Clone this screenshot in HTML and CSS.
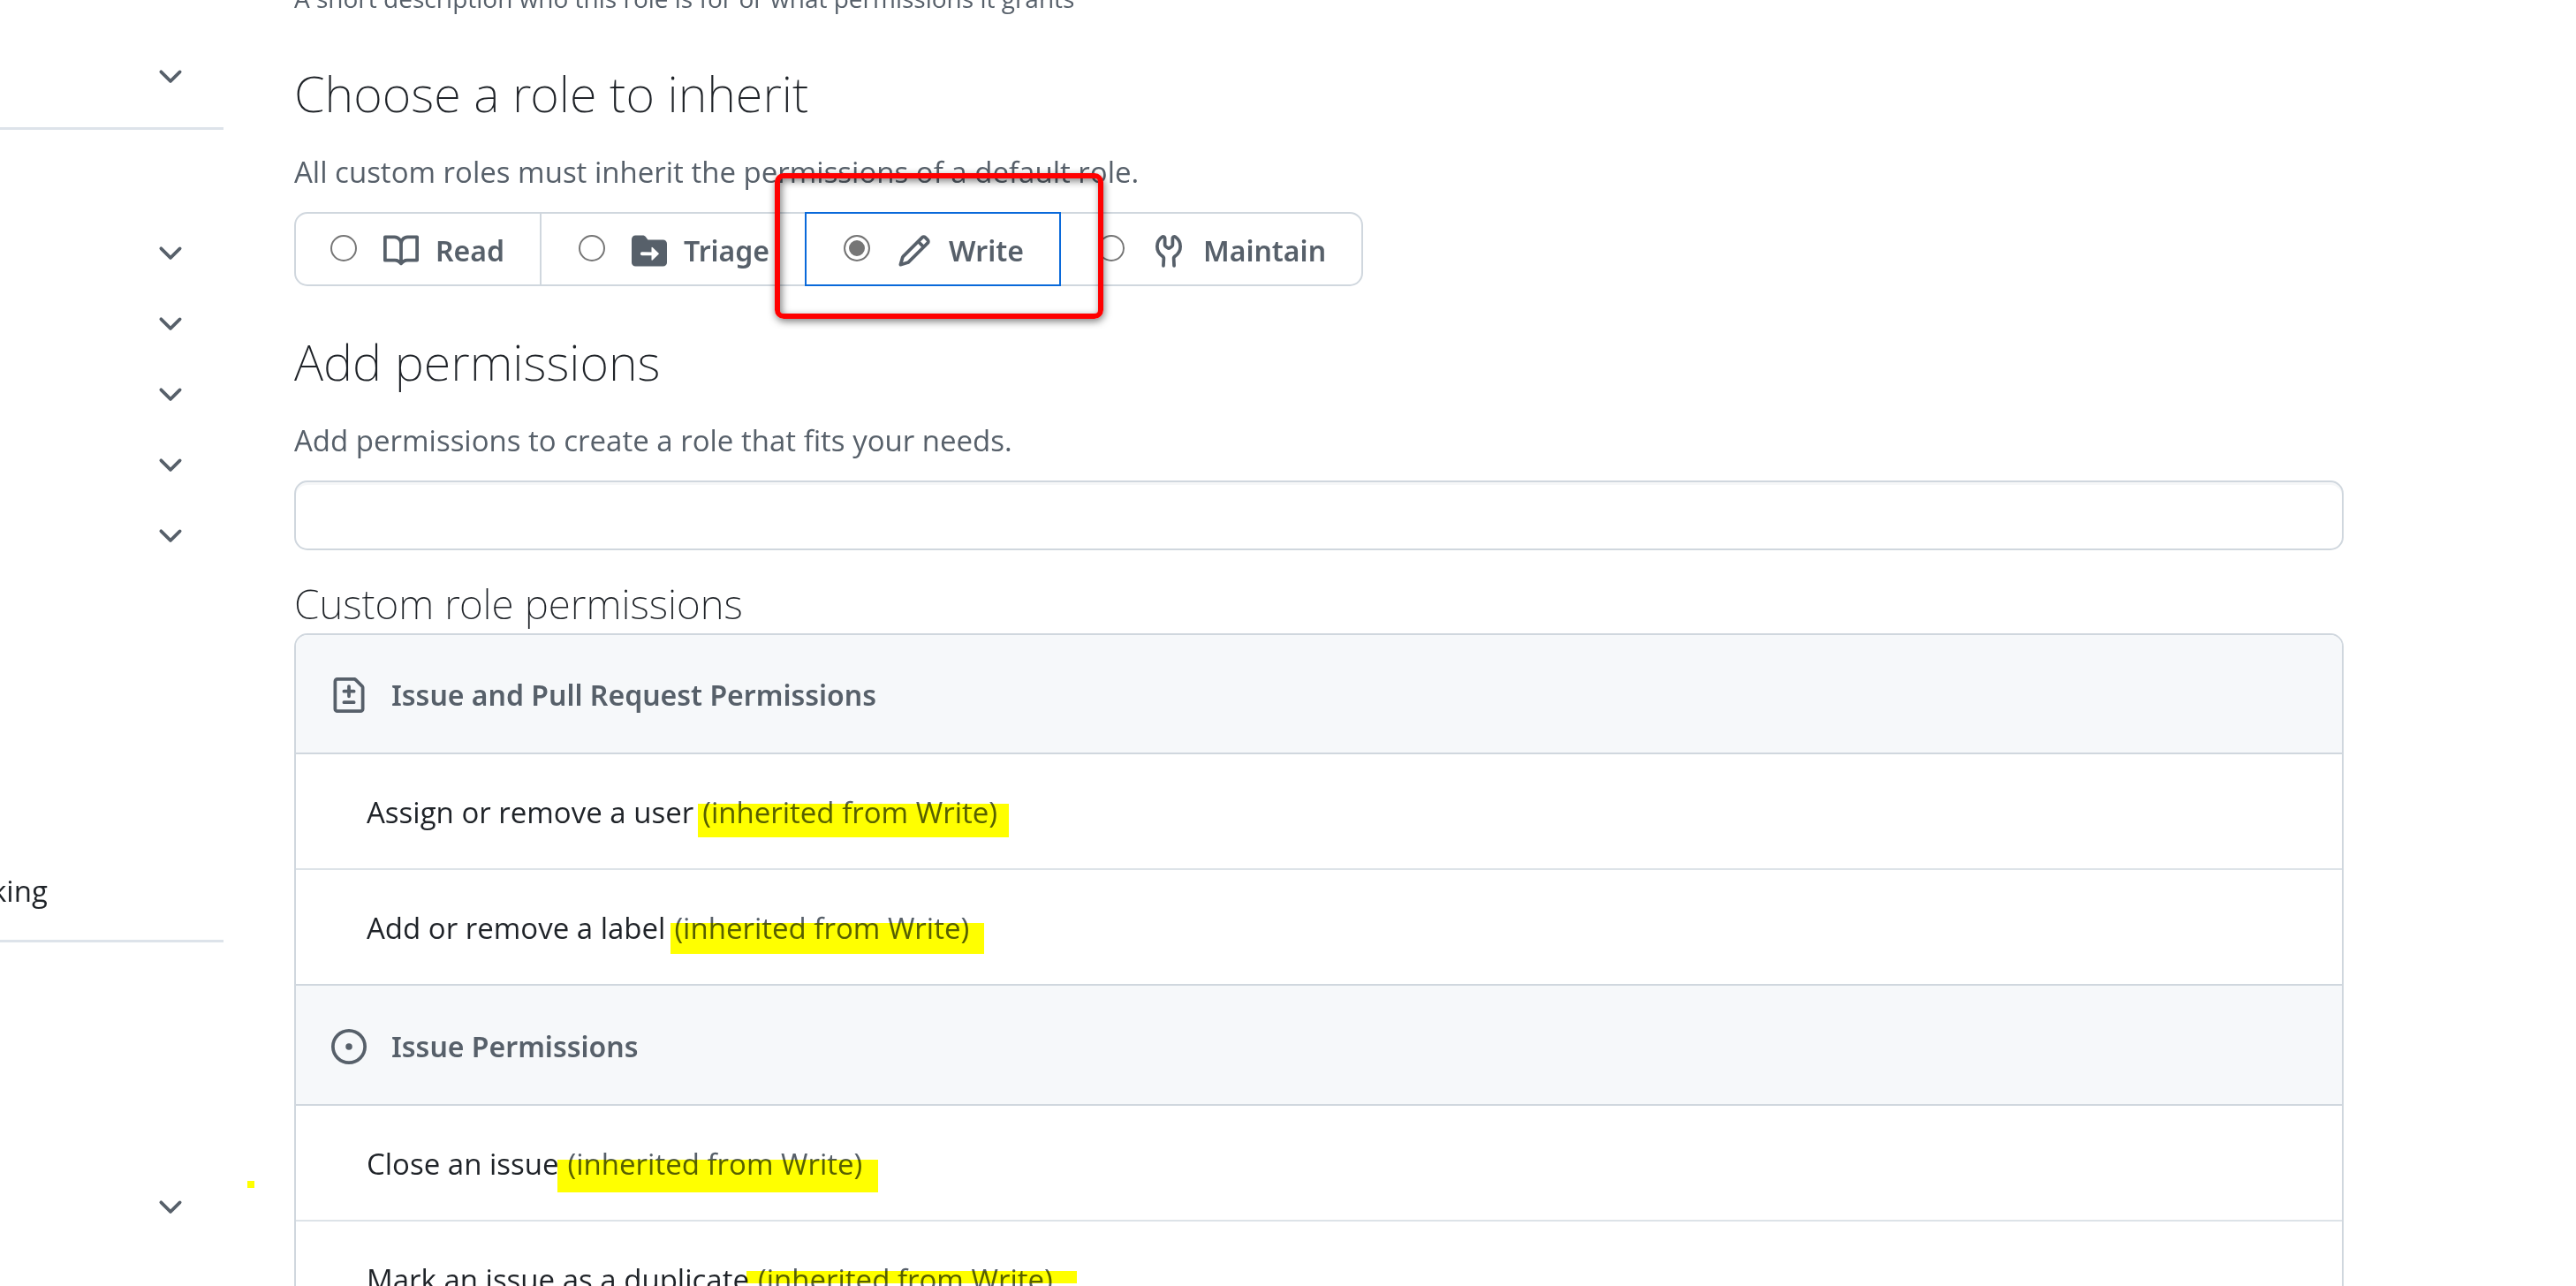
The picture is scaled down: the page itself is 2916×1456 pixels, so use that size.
FILE: index.html
```html
<!DOCTYPE html>
<html lang="en">
<head>
<meta charset="utf-8">
<title>Create a custom role</title>
<link rel="stylesheet" href="styles.css">
</head>
<body>
<svg class="sprite" aria-hidden="true">
  <symbol id="chevron" viewBox="0 0 16 16"><path d="M12.78 5.22a.75.75 0 0 1 0 1.06l-4.25 4.25a.75.75 0 0 1-1.06 0L3.22 6.28a.75.75 0 1 1 1.06-1.06L8 8.94l3.72-3.72a.75.75 0 0 1 1.06 0Z"/></symbol>
</svg>
<div class="layout">
  <nav class="sidebar" aria-label="Settings">
    <button class="nav-row" type="button" aria-label="Expand section"><svg class="icon"><use href="#chevron"/></svg></button>
    <hr class="nav-divider">
    <div class="nav-group">
      <button class="nav-row" type="button" aria-label="Expand section"><svg class="icon"><use href="#chevron"/></svg></button>
      <button class="nav-row" type="button" aria-label="Expand section"><svg class="icon"><use href="#chevron"/></svg></button>
      <button class="nav-row" type="button" aria-label="Expand section"><svg class="icon"><use href="#chevron"/></svg></button>
      <button class="nav-row" type="button" aria-label="Expand section"><svg class="icon"><use href="#chevron"/></svg></button>
      <button class="nav-row" type="button" aria-label="Expand section"><svg class="icon"><use href="#chevron"/></svg></button>
    </div>
    <a class="nav-link" href="#">king</a>
    <hr class="nav-divider">
    <div class="nav-group nav-group-last">
      <button class="nav-row" type="button" aria-label="Expand section"><svg class="icon"><use href="#chevron"/></svg></button>
    </div>
  </nav>

  <main class="main">
    <p class="note">A short description who this role is for or what permissions it grants</p>

    <h2 class="title">Choose a role to inherit</h2>
    <p class="lead">All custom roles must inherit the permissions of a default role.</p>
    <div class="roles" role="radiogroup" aria-label="Choose a role to inherit">
      <label class="role">
        <input class="radio" type="radio" name="role">
        <svg class="icon" viewBox="0 0 16 16"><path d="M0 1.75A.75.75 0 0 1 .75 1h4.253c1.227 0 2.317.59 3 1.501A3.744 3.744 0 0 1 11.006 1h4.245a.75.75 0 0 1 .75.75v10.5a.75.75 0 0 1-.75.75h-4.507a2.25 2.25 0 0 0-1.591.659l-.622.621a.75.75 0 0 1-1.06 0l-.622-.621A2.25 2.25 0 0 0 5.258 13H.75a.75.75 0 0 1-.75-.75Zm7.251 10.324.004-5.073-.002-2.253A2.25 2.25 0 0 0 5.003 2.5H1.5v9h3.757a3.75 3.75 0 0 1 1.994.574ZM8.755 4.75l-.004 7.322a3.752 3.752 0 0 1 1.992-.572H14.5v-9h-3.495a2.25 2.25 0 0 0-2.25 2.25Z"/></svg>
        <span>Read</span>
      </label>
      <label class="role">
        <input class="radio" type="radio" name="role">
        <svg class="icon" viewBox="0 0 16 16"><path d="M1.75 1A1.75 1.75 0 0 0 0 2.75v10.5C0 14.216.784 15 1.75 15h12.5A1.75 1.75 0 0 0 16 13.25v-8.5A1.75 1.75 0 0 0 14.25 3H7.5a.25.25 0 0 1-.2-.1l-.9-1.2C6.07 1.26 5.55 1 5 1Z"/><path class="knockout" d="M9 8.55V6.6q0-.5.45-.2l2.8 2.65q.2.2 0 .45l-2.8 2.65q-.45.3-.45-.2v-1.9H4.7a.75.75 0 0 1 0-1.5Z"/></svg>
        <span>Triage</span>
      </label>
      <label class="role role-selected">
        <input class="radio" type="radio" name="role" checked>
        <svg class="icon" viewBox="0 0 16 16"><path d="M11.013 1.427a1.75 1.75 0 0 1 2.474 0l1.086 1.086a1.75 1.75 0 0 1 0 2.474l-8.61 8.61c-.21.21-.47.364-.756.445l-3.251.93a.75.75 0 0 1-.927-.928l.929-3.25c.081-.286.235-.547.445-.758l8.61-8.61Zm.176 4.823L9.75 4.81l-6.286 6.287a.253.253 0 0 0-.064.108l-.558 1.953 1.953-.558a.253.253 0 0 0 .108-.064Zm1.238-3.763a.25.25 0 0 0-.354 0L10.811 3.75l1.439 1.44 1.263-1.263a.25.25 0 0 0 0-.354Z"/></svg>
        <span>Write</span>
        <span class="callout" aria-hidden="true"></span>
      </label>
      <label class="role">
        <input class="radio" type="radio" name="role">
        <svg class="icon" viewBox="0 0 16 16"><path d="M5.433 2.304A4.494 4.494 0 0 0 3.5 6c0 1.598.832 3.002 2.09 3.802.518.328.929.923.902 1.64v.008l-.164 3.337a.75.75 0 1 1-1.498-.073l.163-3.33c.002-.085-.05-.216-.207-.316A5.996 5.996 0 0 1 2 6a5.994 5.994 0 0 1 2.567-4.92 1.482 1.482 0 0 1 1.673-.04c.462.296.76.827.76 1.423v2.82c0 .082.041.16.11.206l.75.51a.25.25 0 0 0 .28 0l.75-.51A.25.25 0 0 0 9 5.282V2.463c0-.596.298-1.127.76-1.423a1.482 1.482 0 0 1 1.673.04A5.994 5.994 0 0 1 14 6a5.996 5.996 0 0 1-2.786 5.068c-.157.1-.209.23-.207.315l.163 3.33a.75.75 0 1 1-1.498.074l-.164-3.345c-.027-.717.384-1.312.902-1.64A4.496 4.496 0 0 0 12.5 6a4.494 4.494 0 0 0-1.933-3.696c-.024.017-.067.067-.067.16v2.818a1.75 1.75 0 0 1-.767 1.448l-.75.51a1.75 1.75 0 0 1-1.966 0l-.75-.51A1.75 1.75 0 0 1 5.5 5.282V2.463c0-.092-.043-.142-.067-.159Z"/></svg>
        <span>Maintain</span>
      </label>
    </div>

    <h2 class="title">Add permissions</h2>
    <label class="lead" for="permission">Add permissions to create a role that fits your needs.</label>
    <input class="search" id="permission" type="text">

    <h3 class="subtitle">Custom role permissions</h3>
    <ul class="box">
      <li class="box-head">
        <svg class="icon" viewBox="0 0 16 16"><path d="M1 1.75C1 .784 1.784 0 2.75 0h7.586c.464 0 .909.184 1.237.513l2.914 2.914c.329.328.513.773.513 1.237v9.586A1.75 1.75 0 0 1 13.25 16H2.75A1.75 1.75 0 0 1 1 14.25Zm1.75-.25a.25.25 0 0 0-.25.25v12.5c0 .138.112.25.25.25h10.5a.25.25 0 0 0 .25-.25V4.664a.25.25 0 0 0-.073-.177l-2.914-2.914a.25.25 0 0 0-.177-.073ZM8 3.25a.75.75 0 0 1 .75.75v1.5h1.5a.75.75 0 0 1 0 1.5h-1.5v1.5a.75.75 0 0 1-1.5 0V7h-1.5a.75.75 0 0 1 0-1.5h1.5V4A.75.75 0 0 1 8 3.25Zm-3 8a.75.75 0 0 1 .75-.75h4.5a.75.75 0 0 1 0 1.5h-4.5a.75.75 0 0 1-.75-.75Z"/></svg>
        Issue and Pull Request Permissions
      </li>
      <li class="box-row"><span>Assign or remove a user</span><span class="inherited mark-a">(inherited from Write)</span></li>
      <li class="box-row"><span>Add or remove a label</span><span class="inherited mark-b">(inherited from Write)</span></li>
      <li class="box-head">
        <svg class="icon" viewBox="0 0 16 16"><path d="M8 9.5a1.5 1.5 0 1 0 0-3 1.5 1.5 0 0 0 0 3Z"/><path d="M8 0a8 8 0 1 1 0 16A8 8 0 0 1 8 0ZM1.5 8a6.5 6.5 0 1 0 13 0 6.5 6.5 0 0 0-13 0Z"/></svg>
        Issue Permissions
      </li>
      <li class="box-row"><span>Close an issue</span><span class="inherited mark-c">(inherited from Write)</span></li>
      <li class="box-row"><span>Mark an issue as a duplicate</span><span class="inherited mark-d">(inherited from Write)</span></li>
    </ul>
  </main>
  <span class="marker-dot" aria-hidden="true"></span>
</div>
</body>
</html>
```
FILE: styles.css
```css
* {
  box-sizing: border-box;
}

body {
  margin: 0;
  height: 100vh;
  overflow: hidden;
  background: #fff;
  color: #1f2328;
  font-family: "Open Sans", "Noto Sans", sans-serif;
  font-size: 33px;
  line-height: 50px;
}

.sprite {
  display: none;
}

.icon {
  flex: none;
  width: 40px;
  height: 40px;
  fill: #57606a;
}

.icon .knockout {
  fill: #fff;
}

.layout {
  position: relative;
  display: flex;
  gap: 80px;
  padding-right: 263px;
}

/* Sidebar */

.sidebar {
  flex: none;
  width: 253px;
  padding-top: 47px;
}

.nav-row {
  display: flex;
  align-items: center;
  justify-content: flex-end;
  width: 100%;
  height: 80px;
  padding: 0 40px 0 0;
  border: 0;
  background: none;
}

.nav-divider {
  height: 3px;
  margin: 17px 0 0;
  border: 0;
  background: #dde3ea;
}

.nav-group {
  padding-top: 100px;
}

.nav-group-last {
  padding-top: 260px;
}

.nav-link {
  display: block;
  height: 78px;
  margin: 322px 0 0 -10px;
  color: #1f2328;
  line-height: 80px;
  text-decoration: none;
}

/* Main column */

.main {
  flex: 1;
  min-width: 0;
  margin-top: -22px;
}

.note,
.lead {
  display: block;
  margin: 0;
  color: #57606a;
}

.note {
  font-size: 28px;
  line-height: 40px;
}

.lead {
  margin: 23px 0 20px;
}

.title,
.subtitle {
  margin: 43px 0 0;
  font-family: "Noto Sans", sans-serif;
  font-size: 56px;
  font-weight: 200;
  line-height: 84px;
}

.note + .title {
  margin-top: 45px;
}

.subtitle {
  margin-top: 26px;
  font-size: 46px;
  line-height: 68px;
}

/* Role picker */

.roles {
  display: flex;
}

.role {
  position: relative;
  display: flex;
  align-items: center;
  height: 84px;
  padding: 3px 40px 0 42px;
  border: 2px solid #d0d7de;
}

.role,
.box-head {
  color: #57606a;
  font-family: "Noto Sans", sans-serif;
  font-size: 32px;
  font-weight: 600;
}

.role + .role {
  margin-left: -2px;
}

.role:first-child {
  padding-left: 39px;
  border-radius: 15px 0 0 15px;
}

.role:last-child {
  border-radius: 0 15px 15px 0;
}

.role-selected {
  z-index: 1;
  border-color: #0969da;
}

.role .icon {
  margin: 0 19px 0 30px;
}

.radio {
  appearance: none;
  flex: none;
  width: 30px;
  height: 30px;
  margin: 0 0 6px;
  border: 2px solid #767676;
  border-radius: 50%;
}

.radio:checked {
  background: #767676;
  box-shadow: inset 0 0 0 4px #fff;
}

.callout {
  position: absolute;
  top: -46px;
  right: -50px;
  bottom: -39px;
  left: -36px;
  border: 6px solid #f00;
  border-radius: 10px;
  box-shadow: 1px 3px 8px rgba(0, 0, 0, 0.5), inset 2px 3px 8px rgba(0, 0, 0, 0.5);
}

/* Permission search */

.search {
  display: block;
  width: 100%;
  height: 79px;
  padding: 0 28px;
  border: 2px solid #d0d7de;
  border-radius: 15px;
  background: #fff;
  box-shadow: inset 0 3px 0 rgba(208, 215, 222, 0.2);
  font: inherit;
}

/* Permission list */

.box {
  margin: 0;
  padding: 0;
  border: 2px solid #d0d7de;
  border-radius: 15px;
  list-style: none;
  overflow: hidden;
}

.box-head,
.box-row {
  display: flex;
  align-items: center;
  padding-top: 3px;
  border-top: 2px solid #d0d7de;
}

.box-head {
  gap: 28px;
  height: 136px;
  padding-left: 40px;
  background: #f6f8fa;
}

.box-head:first-child {
  height: 133px;
  border-top: 0;
}

.box-row {
  gap: 10px;
  height: 131px;
  padding-left: 80px;
}

.box-row + .box-row {
  border-top-color: #dde3e8;
}

.inherited {
  position: relative;
  color: #57606a;
}

/* Highlighter strokes over the inherited notes */

.inherited::after {
  content: "";
  position: absolute;
  background: #ff0;
  mix-blend-mode: multiply;
}

.mark-a::after {
  inset: 15px -13px -3px -5px;
}

.mark-b::after {
  inset: 19px -17px -4px -4px;
}

.mark-c::after {
  inset: 20px -18px -7px -12px;
}

.mark-d::after {
  inset: 15px -27px 21px -13px;
}

.marker-dot {
  position: absolute;
  top: 1337px;
  left: 280px;
  width: 8px;
  height: 8px;
  background: #ff0;
}
```
